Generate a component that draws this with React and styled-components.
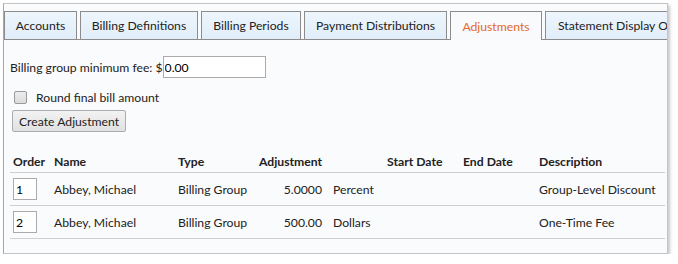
import React from "react"
import styled, { createGlobalStyle } from "styled-components"

const GlobalStyle = createGlobalStyle`
  html, body {
    margin: 0;
    padding: 0;
    background: #ffffff;
    font-family: "Lato", "Noto Sans", sans-serif;
    font-size: 12.2px;
    color: #222;
  }
`

const Frame = styled.div`
  margin: 3px 0 0 3px;
  width: 663px;
  height: 249px;
  border: 1px solid #c4c4c4;
  border-left-color: #a8a8a8;
  background: #fafbfc;
  box-shadow: 2px 2px 3px rgba(0, 0, 0, 0.22);
  overflow: hidden;
  display: flex;
  flex-direction: column;
`

const TabStrip = styled.div`
  display: flex;
  gap: 3px;
  margin-top: 7px;
  height: 28px;
  border-bottom: 1px solid #8c8c8c;
  white-space: nowrap;
`

const Tab = styled.div`
  flex: none;
  width: ${p => p.$w}px;
  box-sizing: border-box;
  display: flex;
  align-items: center;
  justify-content: ${p => (p.$clip ? "flex-start" : "center")};
  padding-left: ${p => (p.$clip ? "12px" : "0")};
  overflow: hidden;
  border: 1px solid #8c8c8c;
  border-bottom: none;
  background: ${p => (p.$active ? "#f8fafb" : "linear-gradient(#eef6fd, #e0edf9)")};
  color: ${p => (p.$active ? "#e4692b" : "#222")};
  height: ${p => (p.$active ? "29px" : "28px")};
  margin-bottom: ${p => (p.$active ? "-1px" : "0")};
`

const Body = styled.div`
  padding: 16px 0 0 6px;
  display: flex;
  flex-direction: column;
`

const FeeRow = styled.div`
  display: flex;
  align-items: center;
  height: 22px;
`

const FeeInput = styled.input`
  width: 103px;
  height: 22px;
  box-sizing: border-box;
  border: 1px solid #ababab;
  background: #fff;
  font: inherit;
  padding: 0 1px;
  margin: 0;
  outline: none;
`

const CheckRow = styled.label`
  display: flex;
  align-items: center;
  gap: 9px;
  margin: 8px 0 0 4px;
  height: 22px;
`

const Check = styled.span`
  width: 11px;
  height: 11px;
  border: 1px solid #9a9a9a;
  border-radius: 2px;
  background: linear-gradient(#ececec, #dcdcdc);
`

const Button = styled.button`
  align-self: flex-start;
  margin: 2px 0 0 2px;
  height: 22px;
  padding: 0 6px;
  border: 1px solid #acacac;
  border-radius: 2px;
  background: linear-gradient(#f2f2f2, #e1e1e1);
  font: inherit;
  color: #222;
`

const Table = styled.div`
  margin-top: 18px;
  width: 655px;
  display: grid;
  grid-template-columns: 44px 124px 81px 128px 76px 76px 1fr;
`

const HeadCell = styled.div`
  font-weight: 700;
  height: 22px;
  display: flex;
  align-items: center;
  border-bottom: 1px solid #cfcfcf;
  padding-left: ${p => (p.$first ? "3px" : "0")};
`

const Cell = styled.div`
  height: 32px;
  display: flex;
  align-items: center;
  border-bottom: 1px solid #cfcfcf;
  padding-left: ${p => (p.$first ? "3px" : "0")};
  white-space: nowrap;
`

const OrderBox = styled.input`
  width: 24px;
  height: 22px;
  box-sizing: border-box;
  border: 1px solid #ababab;
  background: #fff;
  font: inherit;
  padding: 0 2px;
  margin: 0;
  outline: none;
`

const Amount = styled.span`
  width: 63px;
  text-align: right;
  margin-right: 11px;
`

const tabs = [
  { label: "Accounts", w: 73 },
  { label: "Billing Definitions", w: 118 },
  { label: "Billing Periods", w: 100 },
  { label: "Payment Distributions", w: 143 },
  { label: "Adjustments", w: 92 },
  { label: "Statement Display Options", w: 150, clip: true },
]

const columns = ["Order", "Name", "Type", "Adjustment", "Start Date", "End Date", "Description"]

const rows = [
  { order: "1", name: "Abbey, Michael", type: "Billing Group", amount: "5.0000", unit: "Percent", desc: "Group-Level Discount" },
  { order: "2", name: "Abbey, Michael", type: "Billing Group", amount: "500.00", unit: "Dollars", desc: "One-Time Fee" },
]

export default function App() {
  return (
    <>
      <GlobalStyle />
      <Frame>
        <TabStrip>
          {tabs.map(t => (
            <Tab key={t.label} $w={t.w} $clip={t.clip} $active={t.label === "Adjustments"}>
              {t.label}
            </Tab>
          ))}
        </TabStrip>
        <Body>
          <FeeRow>
            Billing group minimum fee: $<FeeInput defaultValue="0.00" />
          </FeeRow>
          <CheckRow>
            <Check />
            Round final bill amount
          </CheckRow>
          <Button>Create Adjustment</Button>
          <Table>
            {columns.map((c, i) => (
              <HeadCell key={c} $first={i === 0}>{c}</HeadCell>
            ))}
            {rows.map(r => (
              <React.Fragment key={r.order}>
                <Cell $first><OrderBox defaultValue={r.order} /></Cell>
                <Cell>{r.name}</Cell>
                <Cell>{r.type}</Cell>
                <Cell><Amount>{r.amount}</Amount>{r.unit}</Cell>
                <Cell />
                <Cell />
                <Cell>{r.desc}</Cell>
              </React.Fragment>
            ))}
          </Table>
        </Body>
      </Frame>
    </>
  )
}
